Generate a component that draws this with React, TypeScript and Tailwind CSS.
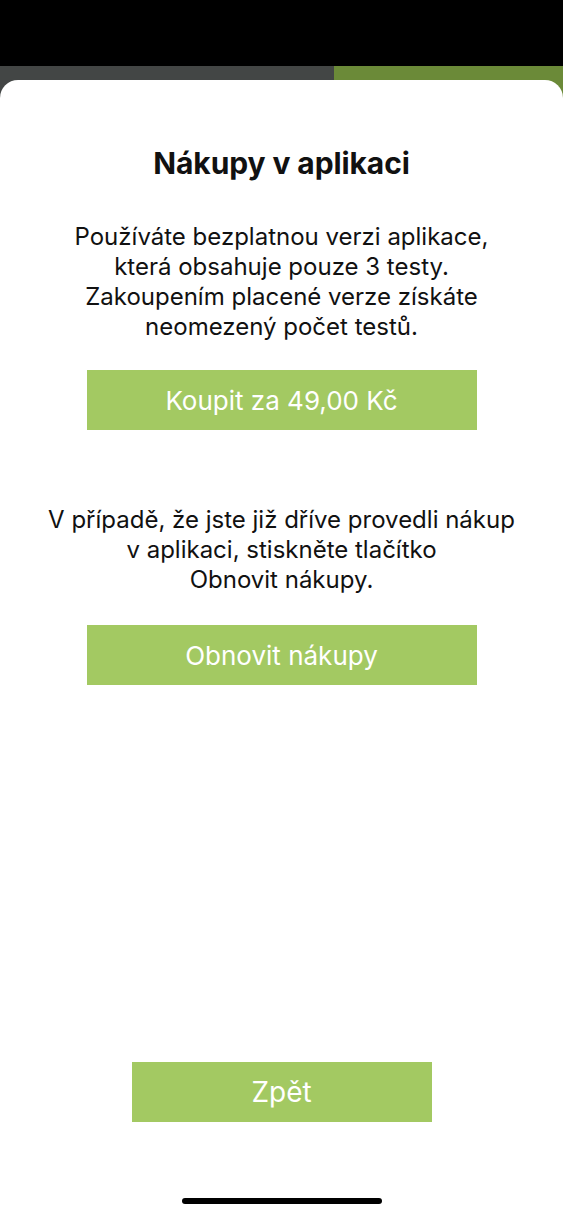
export default function App() {
  return (
    <main className="min-h-screen flex flex-col bg-black font-['Inter','Roboto',sans-serif]">
      {/* Status bar area */}
      <div className="h-[66px] shrink-0 bg-black" />

      {/* Sheet over the split bar */}
      <div className="flex-1 flex flex-col pt-[14px] bg-[linear-gradient(to_right,#434645_334px,#6b8a38_334px)]">
        <section className="flex-1 flex flex-col items-center bg-white rounded-t-[18px] text-[#111]">
          <h1 className="mt-[65px] text-[30px] leading-[36px] font-bold tracking-[-0.1px]">
            Nákupy v aplikaci
          </h1>

          <p className="mt-[41px] text-center text-[24px] leading-[30px]">
            Používáte bezplatnou verzi aplikace,
            <br />
            která obsahuje pouze 3 testy.
            <br />
            Zakoupením placené verze získáte
            <br />
            neomezený počet testů.
          </p>

          <button className="mt-[28px] w-[390px] h-[60px] bg-[#a3c962] text-white text-[26px]">
            Koupit za 49,00 Kč
          </button>

          <p className="mt-[75px] text-center text-[24px] leading-[30px]">
            V případě, že jste již dříve provedli nákup
            <br />
            v aplikaci, stiskněte tlačítko
            <br />
            Obnovit nákupy.
          </p>

          <button className="mt-[30px] w-[390px] h-[60px] bg-[#a3c962] text-white text-[26px]">
            Obnovit nákupy
          </button>

          <div className="flex-1" />

          <button className="w-[300px] h-[60px] bg-[#a3c962] text-white text-[28px]">
            Zpět
          </button>

          {/* Home indicator */}
          <div className="mt-[76px] mb-[14px] w-[200px] h-[6px] rounded-full bg-black" />
        </section>
      </div>
    </main>
  );
}
